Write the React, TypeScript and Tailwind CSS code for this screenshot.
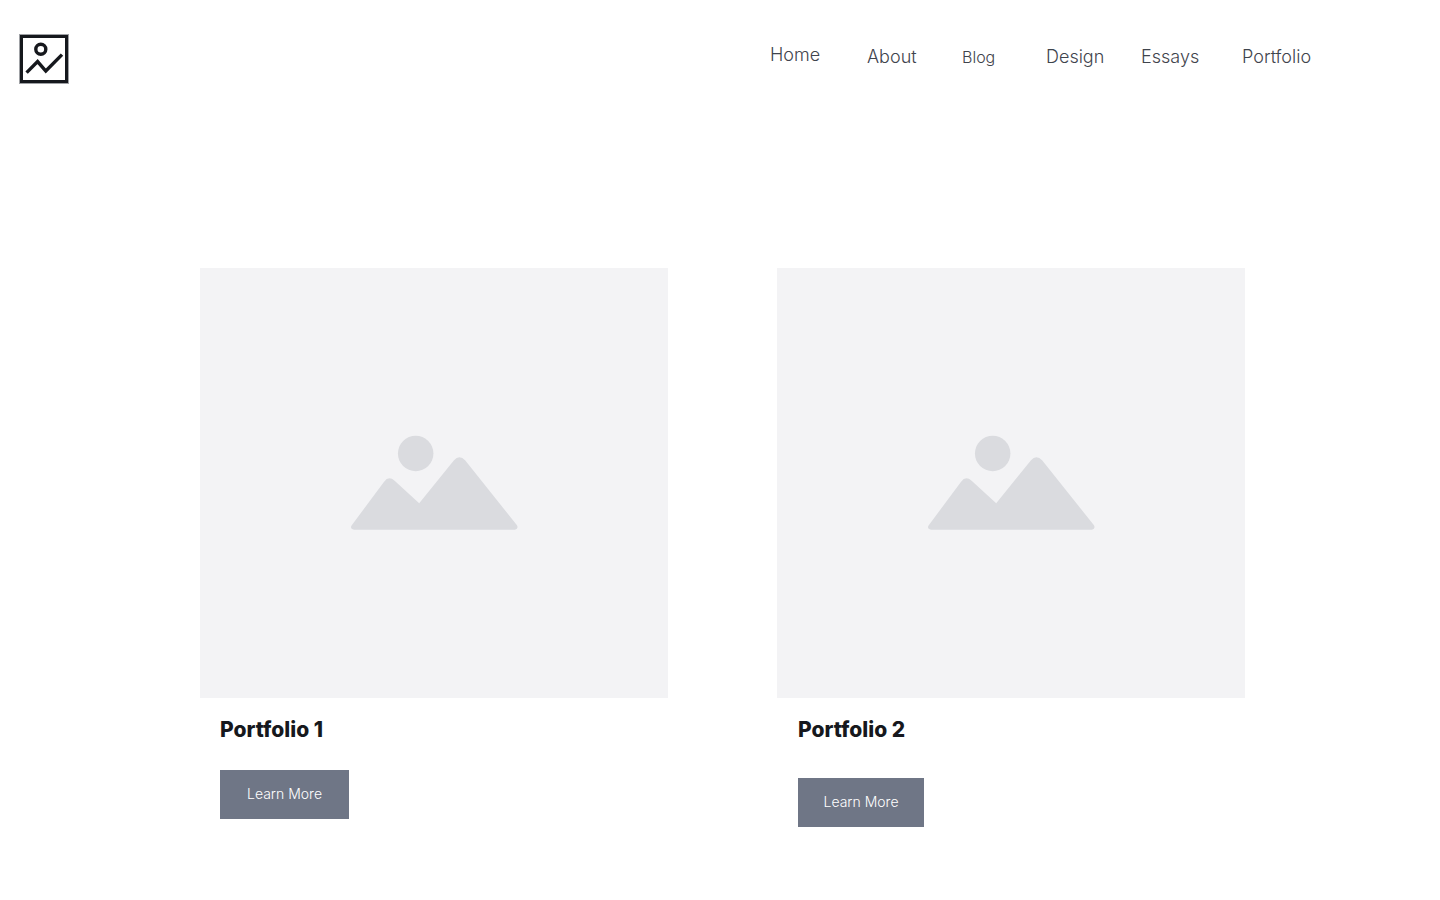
const links = [
  { label: "Home", style: "text-lg pb-1" },
  { label: "About", style: "text-lg" },
  { label: "Blog", style: "text-base" },
  { label: "Design", style: "text-lg" },
  { label: "Essays", style: "text-lg" },
  { label: "Portfolio", style: "text-lg" },
];

const projects = [
  { title: "Portfolio 1", body: "gap-6 pl-5", button: "w-[129px]" },
  { title: "Portfolio 2", body: "gap-8 pl-[21px]", button: "w-[126px]" },
];

function Logo() {
  return (
    <svg viewBox="0 0 50 50" className="size-[50px]" fill="none" stroke="#16181d" aria-hidden="true">
      <rect x="2.4" y="2.4" width="45.2" height="45.2" strokeWidth="3.2" />
      <rect x="0.5" y="0.5" width="49" height="49" stroke="#9fa1a5" strokeWidth="1" />
      <circle cx="21.8" cy="15.2" r="5" strokeWidth="3.4" />
      <path d="M7.6 38.6 L18.6 27.6 L26.8 37 L43 20.6" strokeWidth="3.4" />
    </svg>
  );
}

function Placeholder() {
  return (
    <div className="flex aspect-[468/430] items-center justify-center bg-[#f3f3f5]">
      <svg viewBox="0 0 168 96" className="w-[36%]" fill="#dadbdf" aria-hidden="true">
        <circle cx="65.5" cy="18.4" r="17.7" />
        <path d="M4 94.5 Q0 94 1.4 90.5 L34 46.5 Q38.5 40.5 44.5 45.5 L69 68 L103.5 25.5 Q109 19 115 25.5 L166.5 90 Q168.3 93.5 164.5 94.5 Z" />
      </svg>
    </div>
  );
}

export default function App() {
  return (
    <div className="min-h-screen bg-white font-['Inter','Liberation_Sans',sans-serif]">
      <header className="flex items-center justify-between pt-[34px] pr-[126px] pl-[19px]">
        <a href="#home" aria-label="Home page">
          <Logo />
        </a>
        <nav aria-label="Main" className="pb-1">
          <ul className="grid grid-cols-[97px_95px_84px_95px_101px_72px] items-center font-light text-[#3f444d]">
            {links.map((link) => (
              <li key={link.label}>
                <a href={"#" + link.label.toLowerCase()} className={"block leading-7 " + link.style}>
                  {link.label}
                </a>
              </li>
            ))}
          </ul>
        </nav>
      </header>
      <main className="grid grid-cols-2 items-start gap-[109px] pt-[184px] pr-[195px] pb-16 pl-[200px]">
        {projects.map((project) => (
          <article key={project.title}>
            <Placeholder />
            <div className={"flex flex-col items-start pt-4 " + project.body}>
              <h2 className="text-[21px] leading-8 font-extrabold text-[#16181d]">{project.title}</h2>
              <button
                type="button"
                className={"h-[49px] bg-[#6f7686] pb-0.5 text-sm font-light text-white " + project.button}
              >
                Learn More
              </button>
            </div>
          </article>
        ))}
      </main>
    </div>
  );
}
